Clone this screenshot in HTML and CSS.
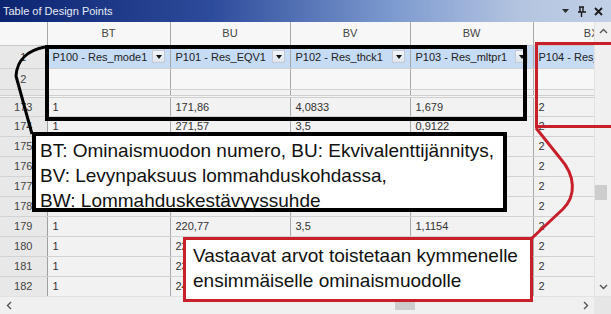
FILE: index.html
```html
<!DOCTYPE html>
<html>
  <head>
    <title>Table of Design Points</title>
    <meta charset="UTF-8">
    <link rel="stylesheet" href="styles.css">
  </head>
  <body>
    <div class="window">
      <div class="titlebar">
        <span class="title">Table of Design Points</span>
        <span class="tools">
          <svg width="9" height="6" viewBox="0 0 9 6"><path d="M1 1h7L4.5 5z" fill="#2a2a2a"/></svg>
          <svg width="10" height="11" viewBox="0 0 10 11"><path d="M3 1v5M6 1v5M2 1h5M1 6h8M4.5 6v5" stroke="#1a1a1a" stroke-width="1.4" fill="none"/></svg>
          <svg width="9" height="9" viewBox="0 0 9 9"><path d="M1 1l7 7M8 1l-7 7" stroke="#1a1a1a" stroke-width="1.8"/></svg>
        </span>
      </div>

      <div class="main">
        <div class="grid-wrap">
          <table class="grid">
            <colgroup>
              <col class="c-num"><col class="c-bt"><col class="c-bu"><col class="c-bv"><col class="c-bw"><col class="c-bx">
            </colgroup>
            <tr class="head">
              <th></th><th>BT</th><th>BU</th><th>BV</th><th>BW</th><th class="cut">BX</th>
            </tr>
            <tr class="params">
              <td class="num">1</td>
              <td><div class="param"><span>P100 - Res_mode1</span><span class="drop"></span></div></td>
              <td><div class="param"><span>P101 - Res_EQV1</span><span class="drop"></span></div></td>
              <td><div class="param"><span>P102 - Res_thck1</span><span class="drop"></span></div></td>
              <td><div class="param"><span>P103 - Res_mltpr1</span><span class="drop"></span></div></td>
              <td><div class="param"><span>P104 - Res_mltpr2</span><span class="drop"></span></div></td>
            </tr>
            <tr class="units">
              <td class="num">2</td><td></td><td></td><td></td><td></td><td></td>
            </tr>
            <tr class="gap">
              <td class="num"></td><td></td><td></td><td></td><td></td><td></td>
            </tr>
            <tr><td class="num">173</td><td>1</td><td>171,86</td><td>4,0833</td><td>1,679</td><td>2</td></tr>
            <tr><td class="num">174</td><td>1</td><td>271,57</td><td>3,5</td><td>0,9122</td><td>2</td></tr>
            <tr><td class="num">175</td><td>1</td><td>184,22</td><td>3,5</td><td>1,3348</td><td>2</td></tr>
            <tr><td class="num">176</td><td>1</td><td>196,40</td><td>3,5</td><td>1,2511</td><td>2</td></tr>
            <tr><td class="num">177</td><td>1</td><td>203,15</td><td>3,5</td><td>1,2107</td><td>2</td></tr>
            <tr><td class="num">178</td><td>1</td><td>211,93</td><td>3,5</td><td>1,1603</td><td>2</td></tr>
            <tr><td class="num">179</td><td>1</td><td>220,77</td><td>3,5</td><td>1,1154</td><td>2</td></tr>
            <tr><td class="num">180</td><td>1</td><td>229,46</td><td>3,5</td><td>1,0732</td><td>2</td></tr>
            <tr><td class="num">181</td><td>1</td><td>238,10</td><td>3,5</td><td>1,0343</td><td>2</td></tr>
            <tr><td class="num">182</td><td>1</td><td>246,81</td><td>3,5</td><td>0,9978</td><td>2</td></tr>
          </table>
        </div>

        <div class="vscroll">
          <div class="arrow">
            <svg width="9" height="6" viewBox="0 0 9 6"><path d="M1 5l3.5-3.5L8 5" stroke="#555" stroke-width="1.4" fill="none"/></svg>
          </div>
          <div class="track"><div class="thumb"></div></div>
          <div class="arrow">
            <svg width="9" height="6" viewBox="0 0 9 6"><path d="M1 1l3.5 3.5L8 1" stroke="#555" stroke-width="1.4" fill="none"/></svg>
          </div>
        </div>
      </div>

      <div class="hscroll">
        <div class="arrow">
          <svg width="6" height="9" viewBox="0 0 6 9"><path d="M5 1L1.5 4.5 5 8" stroke="#555" stroke-width="1.4" fill="none"/></svg>
        </div>
        <div class="track"><div class="thumb"></div></div>
        <div class="arrow">
          <svg width="6" height="9" viewBox="0 0 6 9"><path d="M1 1l3.5 3.5L1 8" stroke="#555" stroke-width="1.4" fill="none"/></svg>
        </div>
        <div class="corner"></div>
      </div>

      <!-- annotations drawn over the table -->
      <div class="mark-black"></div>
      <div class="mark-red"></div>
      <svg class="leaders" width="611" height="314" viewBox="0 0 611 314">
        <path d="M45 47C29 50 17 59 16 76L32 134" stroke="#000" stroke-width="3" fill="none"/>
        <path d="M536 128L560 158C576 176 576 196 563 209L531 239" stroke="#c8202b" stroke-width="3" fill="none"/>
      </svg>
      <div class="note note-black">
        BT: Ominaismuodon numero, BU: Ekvivalenttijännitys,<br>
        BV: Levynpaksuus lommahduskohdassa,<br>
        BW: Lommahduskestävyyssuhde
      </div>
      <div class="note note-red">
        Vastaavat arvot toistetaan kymmenelle<br>
        ensimmäiselle ominaismuodolle
      </div>
    </div>
  </body>
</html>
```

FILE: styles.css
```css
* {
  box-sizing: border-box;
  margin: 0;
  padding: 0;
}

body {
  background: #fff;
  font-family: "Liberation Sans", Arial, sans-serif;
}

.window {
  position: relative;
  width: 611px;
  height: 314px;
  overflow: hidden;
  background: #f0f0f0;
}

/* title bar */
.titlebar {
  height: 22px;
  display: flex;
  align-items: center;
  justify-content: space-between;
  padding: 0 8px 0 3px;
  background: linear-gradient(to right, #0c2470 0%, #2e4c9c 35%, #7f9cd0 65%, #b3c4e0 85%, #c2d0e6 100%);
}

.title {
  color: #e8ecf6;
  font-size: 11px;
}

.tools {
  display: flex;
  align-items: center;
  gap: 7px;
}

/* grid */
.main {
  display: flex;
  height: 274px;
}

.grid-wrap {
  width: 594px;
  overflow: hidden;
  background: #f4f4f4;
}

.grid {
  border-collapse: collapse;
  table-layout: fixed;
  width: 653px;
  font-size: 11px;
  color: #333;
}

.c-num { width: 47px; }
.c-bt { width: 123px; }
.c-bu { width: 120px; }
.c-bv { width: 120px; }
.c-bw { width: 123px; }
.c-bx { width: 120px; }

.grid th,
.grid td {
  height: 20px;
  padding: 0 5px;
  text-align: left;
  white-space: nowrap;
  overflow: hidden;
  border-right: 1px solid #a8a8a8;
  border-bottom: 1px solid #d2d2d2;
  background: #f2f2f2;
}

.grid th {
  height: 23px;
  font-weight: normal;
  text-align: center;
  color: #444;
  background: #f7f7f7;
  border-bottom: 1px solid #c8c8c8;
}

.grid th.cut {
  text-align: right;
  padding-right: 54px;
}

.grid td.num {
  text-align: center;
  color: #444;
  background: #e8e8e8;
  border-right: 1px solid #a0a0a0;
}

.params td {
  height: 23px;
  background: #c6dbf4;
  color: #222;
}

.units td {
  height: 21px;
  background: #f7f7f7;
}

.gap td {
  height: 7px;
  border-bottom: 3px double #cfcfcf;
}

.param {
  display: flex;
  align-items: center;
  justify-content: space-between;
}

.drop {
  width: 13px;
  height: 13px;
  background: linear-gradient(#f4f6fa, #dfe4ec);
  border: 1px solid #c4cad4;
  position: relative;
}

.drop::after {
  content: "";
  position: absolute;
  left: 3px;
  top: 4px;
  border-left: 3px solid transparent;
  border-right: 3px solid transparent;
  border-top: 4px solid #111;
}

/* scroll bars */
.vscroll {
  width: 17px;
  display: flex;
  flex-direction: column;
  background: #f0f0f0;
  border-left: 1px solid #e2e2e2;
}

.vscroll .arrow {
  height: 18px;
  display: flex;
  align-items: center;
  justify-content: center;
}

.vscroll .track {
  flex: 1;
}

.vscroll .thumb {
  margin: 145px 0 0 0;
  width: 12px;
  height: 15px;
  background: #cdcdcd;
}

.hscroll {
  height: 18px;
  display: flex;
  align-items: center;
  background: #f0f0f0;
  border-top: 1px solid #e2e2e2;
}

.hscroll .arrow {
  width: 17px;
  height: 100%;
  display: flex;
  align-items: center;
  justify-content: center;
}

.hscroll .track {
  flex: 1;
}

.hscroll .thumb {
  margin-left: 378px;
  width: 20px;
  height: 8px;
  background: #cdcdcd;
}

.hscroll .corner {
  width: 17px;
  height: 100%;
  background: #e6e6e6;
}

/* annotations */
.mark-black {
  position: absolute;
  left: 45px;
  top: 45px;
  width: 482px;
  height: 76px;
  border: 4px solid #000;
}

.mark-red {
  position: absolute;
  left: 535px;
  top: 42px;
  width: 90px;
  height: 86px;
  border: 3px solid #c8202b;
  border-right: none;
}

.leaders {
  position: absolute;
  left: 0;
  top: 0;
}

.note {
  position: absolute;
  background: #fff;
  color: #111;
  font-family: "Liberation Sans", Arial, sans-serif;
  font-size: 19px;
  line-height: 25px;
  white-space: nowrap;
}

.note-black {
  left: 32px;
  top: 132px;
  width: 475px;
  height: 80px;
  padding: 2px 0 0 4px;
  border: 4px solid #000;
}

.note-red {
  left: 183px;
  top: 237px;
  width: 350px;
  height: 65px;
  padding: 3px 0 0 7px;
  border: 3px solid #c8202b;
}
```
